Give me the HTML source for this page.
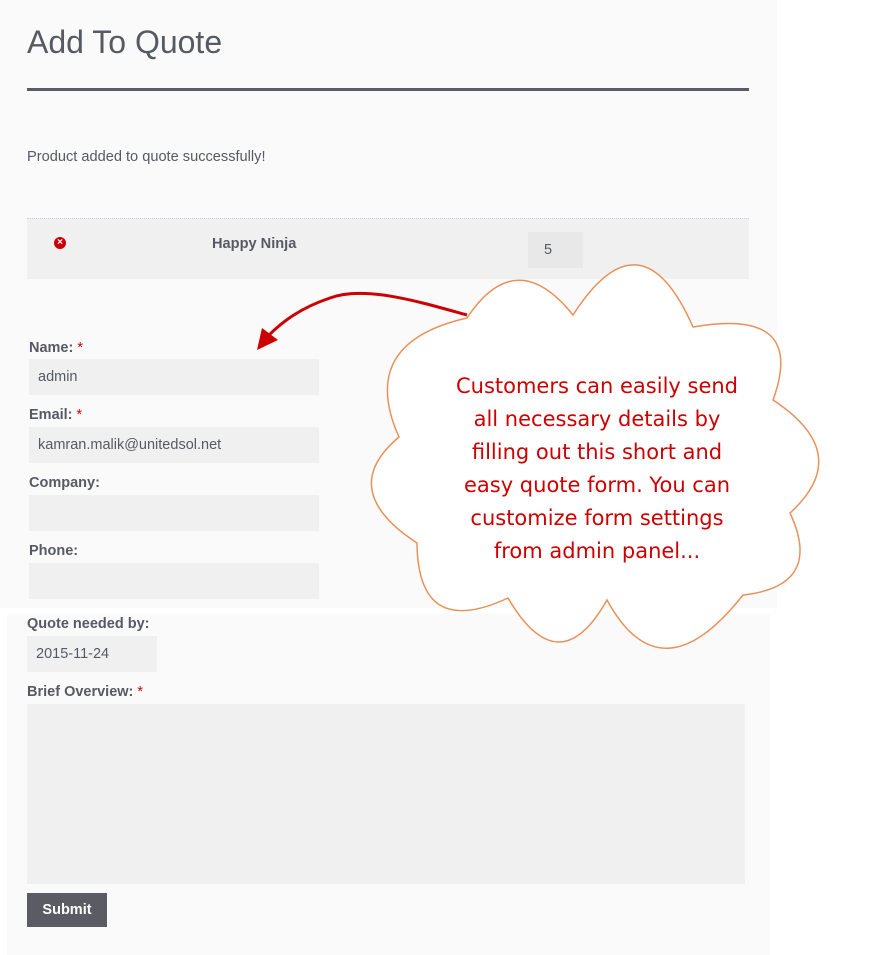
<!DOCTYPE html>
<html><head><style>
body{margin:0;width:879px;height:955px;background:#fff;position:relative;overflow:hidden;font-family:"Liberation Sans",Arial,sans-serif;color:#555a63}
.a{position:absolute}
.lbl{position:absolute;font-size:14.5px;font-weight:bold;color:#555a63}
.lbl i{color:#c00;font-style:normal;font-weight:normal}
.inp{position:absolute;background:#f0f0f0;font-size:14.5px;color:#555a63;box-sizing:border-box;padding-left:9px;line-height:36px;height:36px}
</style></head><body>
<div class="a" style="left:0;top:0;width:777px;height:608px;background:#fafafa"></div>
<div class="a" style="left:7px;top:614px;width:763px;height:341px;background:#fafafa"></div>
<div class="a" style="left:27px;top:24px;font-size:32px;color:#555a63">Add To Quote</div>
<div class="a" style="left:27px;top:88px;width:722px;height:3px;background:#5a5b63"></div>
<div class="a" style="left:27px;top:149px;font-size:14.6px">Product added to quote successfully!</div>
<div class="a" style="left:27px;top:218px;width:722px;height:60px;background:#f0f0f0;border-top:1px dotted #c8cce0"></div>
<div class="a" style="left:54px;top:237px;width:12px;height:12px;border-radius:50%;background:#c00;color:#fff;font-size:10px;font-weight:bold;line-height:12px;text-align:center">×</div>
<div class="a" style="left:212px;top:236px;font-size:14.6px;font-weight:bold">Happy Ninja</div>
<div class="a" style="left:528px;top:232px;width:55px;height:36px;background:#e8e8e8;font-size:14.5px;line-height:36px;padding-left:16px;box-sizing:border-box">5</div>
<div class="lbl" style="left:29px;top:340px">Name: <i>*</i></div>
<div class="inp" style="left:29px;top:359px;width:290px">admin</div>
<div class="lbl" style="left:29px;top:407px">Email: <i>*</i></div>
<div class="inp" style="left:29px;top:427px;width:290px">kamran.malik@unitedsol.net</div>
<div class="lbl" style="left:29px;top:475px">Company:</div>
<div class="inp" style="left:29px;top:495px;width:290px"></div>
<div class="lbl" style="left:29px;top:543px">Phone:</div>
<div class="inp" style="left:29px;top:563px;width:290px"></div>
<div class="lbl" style="left:27px;top:616px">Quote needed by:</div>
<div class="inp" style="left:27px;top:636px;width:130px">2015-11-24</div>
<div class="lbl" style="left:27px;top:684px">Brief Overview: <i>*</i></div>
<div class="a" style="left:27px;top:704px;width:718px;height:180px;background:#f0f0f0"></div>
<div class="a" style="left:27px;top:893px;width:80px;height:34px;background:#5a5b63;color:#fff;font-size:14.5px;font-weight:bold;line-height:34px;text-align:center">Submit</div>
<svg class="a" style="left:0;top:0" width="879" height="955">
<path d="M467,318 Q516,244 573,315 Q641,209 693,327 Q807,307 773,400 Q855,454 790,513 Q824,586 743,595 Q661,699 607,600 Q559,685 508,598 Q418,640 417,543 Q336,490 399,437 Q357,343 467,318 Z" fill="#fff" stroke="#e8915a" stroke-width="1.5"/>
<path d="M467,315 C420,302 365,285 330,298 C300,308 282,322 268,336" fill="none" stroke="#c00" stroke-width="3"/>
<polygon points="257,350 262,328 278,340" fill="#c00"/>
<g font-family="'Comic Sans MS','DejaVu Sans',sans-serif" font-size="21" fill="#c00" text-anchor="middle">
<text x="597" y="393">Customers can easily send</text>
<text x="597" y="426">all necessary details by</text>
<text x="597" y="459">filling out this short and</text>
<text x="597" y="492">easy quote form. You can</text>
<text x="597" y="525">customize form settings</text>
<text x="597" y="558">from admin panel...</text>
</g>
</svg>
</body></html>
